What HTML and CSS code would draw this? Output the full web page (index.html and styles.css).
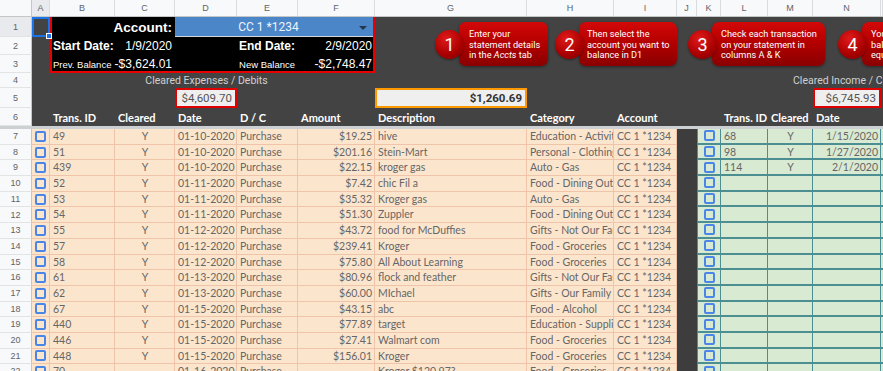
FILE: index.html
```html
<!DOCTYPE html>
<html lang="en">
<head>
  <meta charset="UTF-8">
  <title>Reconcile - CC 1 *1234</title>
  <link rel="stylesheet" href="styles.css">
</head>
<body>

  <div class="sheet">

    <!-- column letters -->
    <div class="row colhead">
      <div class="corner"></div>
      <div class="sel">A</div><div>B</div><div>C</div><div>D</div><div>E</div><div>F</div><div>G</div>
      <div>H</div><div>I</div><div>J</div><div>K</div><div>L</div><div>M</div><div>N</div><div></div>
    </div>

    <!-- rows 1-5 : account box and totals -->
    <div class="top">
      <div class="rn sel">1</div><div class="rn">2</div><div class="rn">3</div><div class="rn">4</div><div class="rn">5</div>
      <div class="a1"><span class="handle"></span></div>
      <div class="acct">
        <div class="acct-label">Account:</div>
        <div class="acct-select">CC 1 *1234<span class="caret"></span></div>
        <div class="big">Start Date:</div><div class="val">1/9/2020</div><div></div><div class="big r">End Date:</div><div class="val">2/9/2020</div>
        <div class="small">Prev. Balance</div><div class="val">-$3,624.01</div><div></div><div class="small r">New Balance</div><div class="val">-$2,748.47</div>
      </div>
      <div class="caption cap-exp">Cleared Expenses / Debits</div>
      <div class="total tot-exp">$4,609.70</div>
      <div class="total tot-diff">$1,260.69</div>
      <div class="caption cap-inc">Cleared Income / Credits</div>
      <div class="total tot-inc">$6,745.93</div>
    </div>

    <!-- row 6 : table headers -->
    <div class="row thead">
      <div class="rn">6</div><div></div><div>Trans. ID</div><div>Cleared</div><div>Date</div><div>D / C</div>
      <div>Amount</div><div>Description</div><div>Category</div><div>Account</div><div></div><div></div>
      <div>Trans. ID</div><div>Cleared</div><div>Date</div><div></div>
    </div>
    <div class="freeze"></div>

    <!-- transactions -->
    <div class="row data">
      <div class="rn">7</div><div class="chk"><i></i></div><div>49</div><div class="c">Y</div><div>01-10-2020</div><div>Purchase</div>
      <div class="r">$19.25</div><div>hive</div><div>Education - Activities</div><div>CC 1 *1234</div><div class="gap"></div>
      <div class="g chk"><i></i></div><div class="g">68</div><div class="g c">Y</div><div class="g r">1/15/2020</div><div class="g"></div>
    </div>
    <div class="row data">
      <div class="rn">8</div><div class="chk"><i></i></div><div>51</div><div class="c">Y</div><div>01-10-2020</div><div>Purchase</div>
      <div class="r">$201.16</div><div>Stein-Mart</div><div>Personal - Clothing</div><div>CC 1 *1234</div><div class="gap"></div>
      <div class="g chk"><i></i></div><div class="g">98</div><div class="g c">Y</div><div class="g r">1/27/2020</div><div class="g"></div>
    </div>
    <div class="row data">
      <div class="rn">9</div><div class="chk"><i></i></div><div>439</div><div class="c">Y</div><div>01-10-2020</div><div>Purchase</div>
      <div class="r">$22.15</div><div>kroger gas</div><div>Auto - Gas</div><div>CC 1 *1234</div><div class="gap"></div>
      <div class="g chk"><i></i></div><div class="g">114</div><div class="g c">Y</div><div class="g r">2/1/2020</div><div class="g"></div>
    </div>
    <div class="row data">
      <div class="rn">10</div><div class="chk"><i></i></div><div>52</div><div class="c">Y</div><div>01-11-2020</div><div>Purchase</div>
      <div class="r">$7.42</div><div>chic Fil a</div><div>Food - Dining Out</div><div>CC 1 *1234</div><div class="gap"></div>
      <div class="g chk"><i></i></div><div class="g"></div><div class="g"></div><div class="g"></div><div class="g"></div>
    </div>
    <div class="row data">
      <div class="rn">11</div><div class="chk"><i></i></div><div>53</div><div class="c">Y</div><div>01-11-2020</div><div>Purchase</div>
      <div class="r">$35.32</div><div>Kroger gas</div><div>Auto - Gas</div><div>CC 1 *1234</div><div class="gap"></div>
      <div class="g chk"><i></i></div><div class="g"></div><div class="g"></div><div class="g"></div><div class="g"></div>
    </div>
    <div class="row data">
      <div class="rn">12</div><div class="chk"><i></i></div><div>54</div><div class="c">Y</div><div>01-11-2020</div><div>Purchase</div>
      <div class="r">$51.30</div><div>Zuppler</div><div>Food - Dining Out</div><div>CC 1 *1234</div><div class="gap"></div>
      <div class="g chk"><i></i></div><div class="g"></div><div class="g"></div><div class="g"></div><div class="g"></div>
    </div>
    <div class="row data">
      <div class="rn">13</div><div class="chk"><i></i></div><div>55</div><div class="c">Y</div><div>01-12-2020</div><div>Purchase</div>
      <div class="r">$43.72</div><div>food for McDuffies</div><div>Gifts - Not Our Family</div><div>CC 1 *1234</div><div class="gap"></div>
      <div class="g chk"><i></i></div><div class="g"></div><div class="g"></div><div class="g"></div><div class="g"></div>
    </div>
    <div class="row data">
      <div class="rn">14</div><div class="chk"><i></i></div><div>57</div><div class="c">Y</div><div>01-12-2020</div><div>Purchase</div>
      <div class="r">$239.41</div><div>Kroger</div><div>Food - Groceries</div><div>CC 1 *1234</div><div class="gap"></div>
      <div class="g chk"><i></i></div><div class="g"></div><div class="g"></div><div class="g"></div><div class="g"></div>
    </div>
    <div class="row data">
      <div class="rn">15</div><div class="chk"><i></i></div><div>58</div><div class="c">Y</div><div>01-12-2020</div><div>Purchase</div>
      <div class="r">$75.80</div><div>All About Learning</div><div>Food - Groceries</div><div>CC 1 *1234</div><div class="gap"></div>
      <div class="g chk"><i></i></div><div class="g"></div><div class="g"></div><div class="g"></div><div class="g"></div>
    </div>
    <div class="row data">
      <div class="rn">16</div><div class="chk"><i></i></div><div>61</div><div class="c">Y</div><div>01-13-2020</div><div>Purchase</div>
      <div class="r">$80.96</div><div>flock and feather</div><div>Gifts - Not Our Family</div><div>CC 1 *1234</div><div class="gap"></div>
      <div class="g chk"><i></i></div><div class="g"></div><div class="g"></div><div class="g"></div><div class="g"></div>
    </div>
    <div class="row data">
      <div class="rn">17</div><div class="chk"><i></i></div><div>62</div><div class="c">Y</div><div>01-13-2020</div><div>Purchase</div>
      <div class="r">$60.00</div><div>MIchael</div><div>Gifts - Our Family</div><div>CC 1 *1234</div><div class="gap"></div>
      <div class="g chk"><i></i></div><div class="g"></div><div class="g"></div><div class="g"></div><div class="g"></div>
    </div>
    <div class="row data">
      <div class="rn">18</div><div class="chk"><i></i></div><div>67</div><div class="c">Y</div><div>01-15-2020</div><div>Purchase</div>
      <div class="r">$43.15</div><div>abc</div><div>Food - Alcohol</div><div>CC 1 *1234</div><div class="gap"></div>
      <div class="g chk"><i></i></div><div class="g"></div><div class="g"></div><div class="g"></div><div class="g"></div>
    </div>
    <div class="row data">
      <div class="rn">19</div><div class="chk"><i></i></div><div>440</div><div class="c">Y</div><div>01-15-2020</div><div>Purchase</div>
      <div class="r">$77.89</div><div>target</div><div>Education - Supplies</div><div>CC 1 *1234</div><div class="gap"></div>
      <div class="g chk"><i></i></div><div class="g"></div><div class="g"></div><div class="g"></div><div class="g"></div>
    </div>
    <div class="row data">
      <div class="rn">20</div><div class="chk"><i></i></div><div>446</div><div class="c">Y</div><div>01-15-2020</div><div>Purchase</div>
      <div class="r">$27.41</div><div>Walmart com</div><div>Food - Groceries</div><div>CC 1 *1234</div><div class="gap"></div>
      <div class="g chk"><i></i></div><div class="g"></div><div class="g"></div><div class="g"></div><div class="g"></div>
    </div>
    <div class="row data">
      <div class="rn">21</div><div class="chk"><i></i></div><div>448</div><div class="c">Y</div><div>01-15-2020</div><div>Purchase</div>
      <div class="r">$156.01</div><div>Kroger</div><div>Food - Groceries</div><div>CC 1 *1234</div><div class="gap"></div>
      <div class="g chk"><i></i></div><div class="g"></div><div class="g"></div><div class="g"></div><div class="g"></div>
    </div>
    <div class="row data">
      <div class="rn">22</div><div class="chk"><i></i></div><div>70</div><div class="c"></div><div>01-16-2020</div><div>Purchase</div>
      <div class="r"></div><div>Kroger $120.97?</div><div>Food - Groceries</div><div>CC 1 *1234</div><div class="gap"></div>
      <div class="g chk"><i></i></div><div class="g"></div><div class="g"></div><div class="g"></div><div class="g"></div>
    </div>

    <!-- instruction callouts drawn over the sheet -->
    <div class="step step1">
      <span class="num">1</span>
      <p class="bubble">Enter your<br>statement details<br>in the <em>Accts</em> tab</p>
    </div>
    <div class="step step2">
      <span class="num">2</span>
      <p class="bubble">Then select the<br>account you want to<br>balance in D1</p>
    </div>
    <div class="step step3">
      <span class="num">3</span>
      <p class="bubble">Check each transaction<br>on your statement in<br>columns A &amp; K</p>
    </div>
    <div class="step step4">
      <span class="num">4</span>
      <p class="bubble">Your statement<br>balance should<br>equal New Balance</p>
    </div>

  </div>

</body>
</html>
```

FILE: styles.css
```css
* {
  box-sizing: border-box;
}

body {
  margin: 0;
  background-color: #fff;
  font-family: "Liberation Sans", Arial, sans-serif;
  overflow: hidden;
}

.sheet {
  --cols: 32px 18px 65px 60px 62px 61px 77px 152px 87px 63px 20px 24px 47px 45px 68px 1fr;
  position: relative;
  height: 371px;
  overflow: hidden;
  background-color: #434343;
}

.row {
  display: grid;
  grid-template-columns: var(--cols);
}

/* column letters */
.colhead {
  height: 17px;
  background-color: #f8f9fa;
  border-bottom: 1px solid #c4c7c5;
}
.colhead > div {
  display: flex;
  align-items: center;
  justify-content: center;
  font-size: 9px;
  color: #5f6368;
  border-right: 1px solid #dadce0;
}
.colhead .corner {
  border-right: 1px solid #c4c7c5;
}
.colhead .sel {
  background-color: #e8eaed;
}

/* row numbers */
.rn {
  display: flex;
  align-items: center;
  justify-content: center;
  background-color: #f8f9fa;
  border-right: 1px solid #c4c7c5;
  border-bottom: 1px solid #e2e3e3;
  font-size: 9px;
  color: #5f6368;
}
.rn.sel {
  background-color: #e8eaed;
}

/* rows 1-5 */
.top {
  display: grid;
  grid-template-columns: var(--cols);
  grid-template-rows: 20px 18px 18px 15px 20px;
}
.top .rn {
  grid-column: 1;
}

.a1 {
  grid-column: 2;
  grid-row: 1;
  position: relative;
  border: 2px solid #1a73e8;
  z-index: 2;
}
.a1 .handle {
  position: absolute;
  right: -4px;
  bottom: -4px;
  width: 6px;
  height: 6px;
  background-color: #1a73e8;
  border: 1px solid #fff;
}

.acct {
  grid-column: 3 / 8;
  grid-row: 1 / 4;
  position: relative;
  display: grid;
  grid-template-columns: 65px 60px 62px 61px 77px;
  grid-template-rows: 20px 18px 18px;
  background-color: #000;
  color: #fff;
}
.acct::after {
  content: '';
  position: absolute;
  inset: 0;
  border: 2px solid #e60000;
  border-top: 0;
  pointer-events: none;
}
.acct > div {
  display: flex;
  align-items: center;
  padding: 0 3px;
  white-space: nowrap;
}
.acct-label {
  grid-column: 1 / 3;
  justify-content: flex-end;
  font-size: 13.5px;
  font-weight: bold;
}
.acct-select {
  grid-column: 3 / 6;
  position: relative;
  justify-content: center;
  padding-right: 16px !important;
  background-color: #4a86c8;
  border-bottom: 1px solid #cfd8e3;
  font-family: Roboto, sans-serif;
  font-size: 12px;
  color: #eef4fb;
}
.caret {
  position: absolute;
  right: 8px;
  top: 9px;
  border-left: 4px solid transparent;
  border-right: 4px solid transparent;
  border-top: 4px solid #22364d;
}
.acct .big {
  font-size: 12px;
  font-weight: bold;
}
.acct .val {
  justify-content: flex-end;
  font-size: 12px;
}
.acct .small {
  font-size: 9.5px;
}
.acct .r {
  justify-content: flex-end;
}

.caption {
  grid-row: 4;
  font-family: Roboto, sans-serif;
  font-size: 10.5px;
  line-height: 15px;
  color: #d0d0d0;
  white-space: nowrap;
  overflow: hidden;
}
.cap-exp {
  grid-column: 4 / 7;
  text-align: center;
}
.cap-inc {
  grid-column: 14 / 17;
  padding-left: 25px;
}

.total {
  grid-row: 5;
  display: flex;
  align-items: center;
  justify-content: flex-end;
  padding: 0 3px;
  background-color: #efefef;
  border: 2px solid #e00000;
  font-family: Roboto, sans-serif;
  font-size: 11.5px;
  color: #555;
}
.tot-exp {
  grid-column: 5;
}
.tot-diff {
  grid-column: 8;
  border-color: #ff9900;
  font-weight: bold;
  color: #333;
}
.tot-inc {
  grid-column: 15;
}

/* row 6 */
.thead {
  height: 18px;
}
.thead > div {
  display: flex;
  align-items: center;
  padding: 0 3px;
  font-family: Lato, sans-serif;
  font-size: 11px;
  font-weight: bold;
  color: #fff;
  white-space: nowrap;
}
.thead .rn {
  justify-content: center;
  padding: 0;
  font-family: "Liberation Sans", Arial, sans-serif;
  font-size: 9px;
  font-weight: normal;
  color: #5f6368;
}

.freeze {
  height: 3px;
  background-color: #ccd0d3;
}

/* transaction rows */
.data {
  height: 15.7px;
}
.data > div {
  padding: 0 2px 0 3px;
  background-color: #fce5cd;
  border-right: 1px solid #efc4a8;
  border-bottom: 1px solid #efc4a8;
  font-family: Lato, sans-serif;
  font-size: 10.5px;
  line-height: 14.5px;
  color: #666;
  white-space: nowrap;
  overflow: hidden;
  text-overflow: clip;
}
.data .c {
  text-align: center;
}
.data .r {
  text-align: right;
}
.data .rn {
  padding: 0;
  background-color: #f8f9fa;
  border-right: 1px solid #c4c7c5;
  border-bottom: 1px solid #e2e3e3;
  font-family: "Liberation Sans", Arial, sans-serif;
  font-size: 9px;
  color: #5f6368;
}
.data .gap {
  background-color: #3d3d3d;
  border: 0;
}
.data .g {
  background-color: #d9ead3;
  border-right: 1px solid #4d8e93;
  border-bottom: 2px solid #4d8e93;
}
.data .g.chk {
  border-left: 1px solid #4d8e93;
}

.data .chk {
  display: flex;
  align-items: center;
  justify-content: center;
  padding: 0;
}
.chk i {
  width: 11px;
  height: 11px;
  border: 2px solid #4a86e8;
  border-radius: 2px;
}

/* callouts */
.step {
  position: absolute;
  top: 22px;
  display: flex;
  align-items: center;
}
.step1 { left: 435px; }
.step2 { left: 555px; }
.step3 { left: 688px; }
.step4 { left: 838px; }

.num {
  position: relative;
  z-index: 1;
  width: 29px;
  height: 29px;
  margin-right: -5px;
  border-radius: 50%;
  background: radial-gradient(circle at 40% 30%, #e21a1a, #a80000 60%, #7a0000);
  box-shadow: 0 1px 2px rgba(0, 0, 0, 0.4);
  font-family: Roboto, sans-serif;
  font-size: 18px;
  line-height: 29px;
  text-align: center;
  color: #fff;
}

.bubble {
  margin: 0;
  height: 44px;
  padding: 7px 4px 0 9px;
  border-radius: 7px;
  background: linear-gradient(#d30808, #b50000 45%, #8a0000);
  box-shadow: 0 1px 3px rgba(0, 0, 0, 0.4);
  font-family: Roboto, sans-serif;
  font-size: 9.2px;
  line-height: 10.5px;
  color: #fff;
  white-space: nowrap;
  overflow: hidden;
}
.step1 .bubble { width: 89px; padding-left: 10px; }
.step2 .bubble { width: 98px; padding-left: 8px; }
.step3 .bubble { width: 113px; }
.step4 .bubble { width: 120px; }
```
